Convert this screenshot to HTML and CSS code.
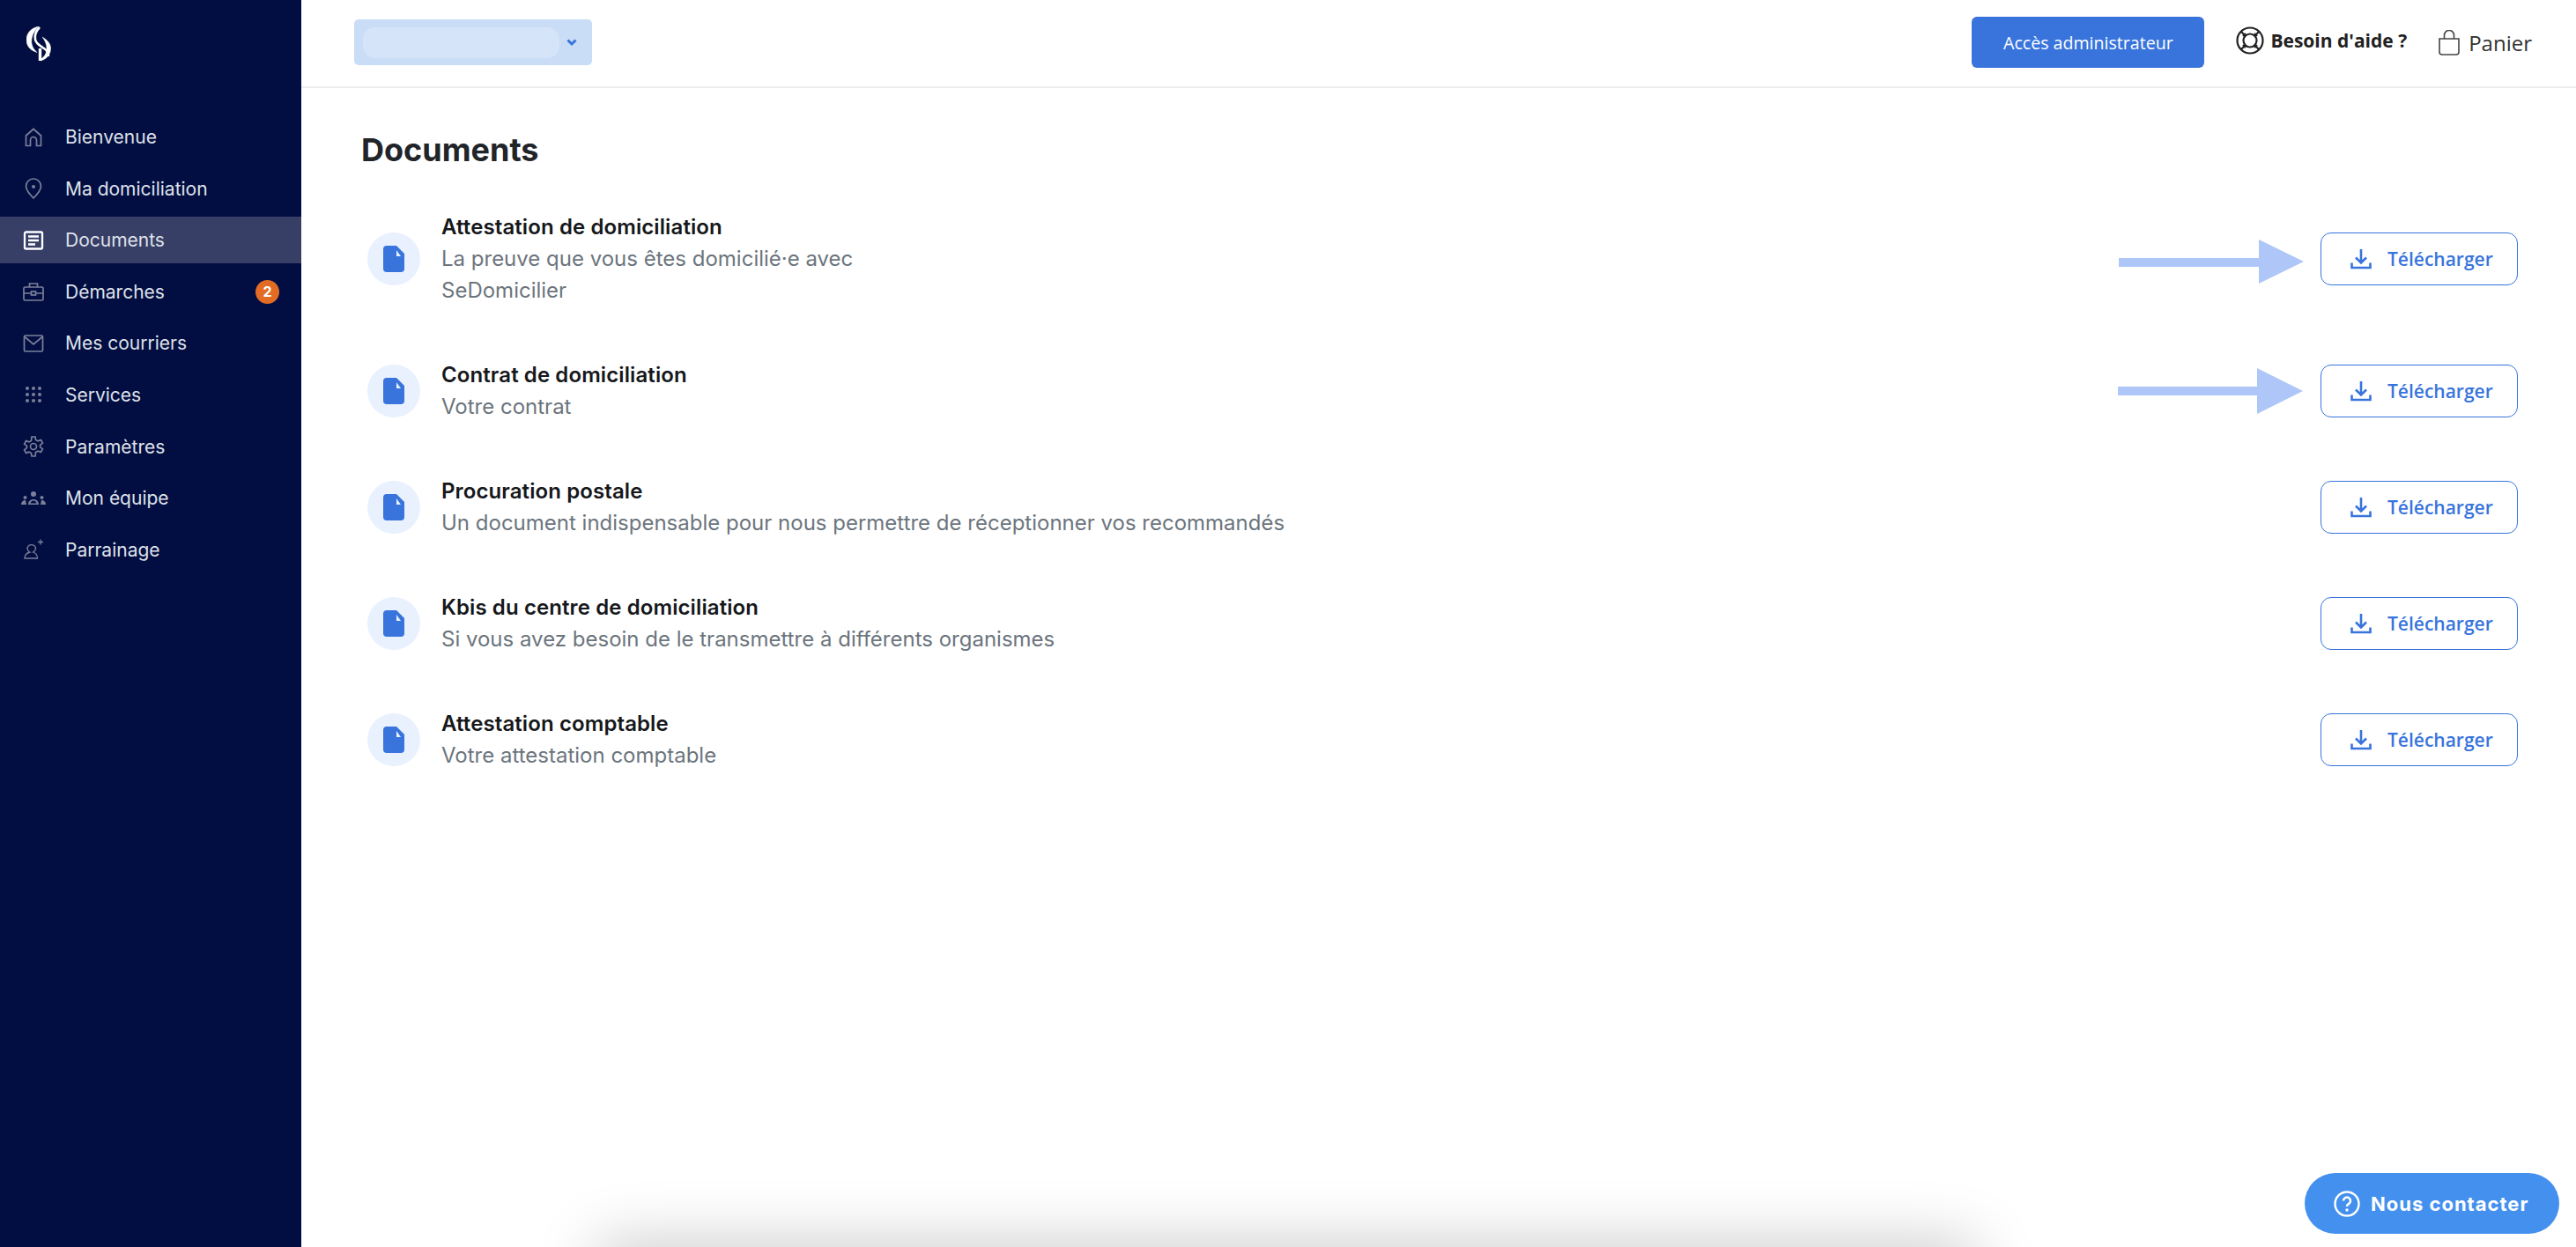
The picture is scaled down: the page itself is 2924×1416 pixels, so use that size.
FILE: index.html
```html
<!DOCTYPE html>
<html lang="fr">
<head>
<meta charset="UTF-8">
<title>Documents</title>
<link rel="stylesheet" href="styles.css">
</head>
<body>

<div class="app">

<!-- Menu de gauche -->
<aside class="sidebar">
    <div class="logo">
        <svg width="30" height="40" viewBox="10 10 30 40" fill="none" stroke="#fff">
            <path d="M24 10C14 12 10 19 10 25c0 7 4 12 12 14.500-5-4.500-7-9.500-6-15.500 1-6 4-10 8-14z" fill="#fff" stroke-width="0.500"/>
            <path d="M25 11c-4 4-6 9-5 14 1 5 6 7 10 10 3 2 5 5 5 9" stroke-width="2.600"/>
            <path d="M26 49c8-2 11.500-8 11.500-14 0-6-4.500-10-9.500-13 3 4 5 8 5 13 0 6-3 10-7 12z" fill="#fff" stroke-width="0.500"/>
            <path d="M25.500 35v14" stroke-width="3.400"/>
        </svg>
    </div>
    <nav class="nav">
        <a class="nav-item">
            <svg class="nav-icon" viewBox="0 0 24 24"><path d="M3.500 21.500V10L12 2.500 20.500 10v11.500h-5V15a3.500 3.500 0 0 0-7 0v6.500z"/></svg>
            <span>Bienvenue</span>
        </a>
        <a class="nav-item">
            <svg class="nav-icon" viewBox="0 0 24 24"><path d="M12 23C7 18 3.500 14 3.500 9.500a8.500 8.500 0 0 1 17 0C20.500 14 17 18 12 23z"/><circle cx="12" cy="10" r="2" class="dot"/></svg>
            <span>Ma domiciliation</span>
        </a>
        <a class="nav-item active">
            <svg class="nav-icon" viewBox="0 0 24 24"><rect x="2" y="2.500" width="20" height="19" rx="1.500"/><path d="M6 7.500h12M6 12h12M6 16.500h8"/></svg>
            <span>Documents</span>
        </a>
        <a class="nav-item">
            <svg class="nav-icon" viewBox="0 0 24 24"><rect x="1" y="7" width="22" height="15" rx="1.500"/><path d="M7.500 7V3h9v4M1 14h8M15 14h8"/><rect x="9.500" y="12" width="5" height="4"/></svg>
            <span>Démarches</span>
            <b class="badge">2</b>
        </a>
        <a class="nav-item">
            <svg class="nav-icon" viewBox="0 0 24 24"><rect x="1.500" y="3" width="21" height="18" rx="1.500"/><path d="M2 4.500L12 13l10-8.500"/></svg>
            <span>Mes courriers</span>
        </a>
        <a class="nav-item">
            <svg class="nav-icon" viewBox="0 0 24 24">
                <g class="dot">
                    <circle cx="5" cy="5" r="2"/><circle cx="12" cy="5" r="2"/><circle cx="19" cy="5" r="2"/>
                    <circle cx="5" cy="12" r="2"/><circle cx="12" cy="12" r="2"/><circle cx="19" cy="12" r="2"/>
                    <circle cx="5" cy="19" r="2"/><circle cx="12" cy="19" r="2"/><circle cx="19" cy="19" r="2"/>
                </g>
            </svg>
            <span>Services</span>
        </a>
        <a class="nav-item">
            <svg class="nav-icon" viewBox="0 0 24 24"><circle cx="12" cy="12" r="3.500"/><path d="M10 1h4l.6 3.500 2.400 1.400 3.400-1.300 2 3.500-2.800 2.300v2.200l2.800 2.300-2 3.500-3.400-1.300-2.400 1.400L14 23h-4l-.6-3.500L7 18.100l-3.400 1.300-2-3.500 2.800-2.300v-2.200L1.600 9.100l2-3.500L7 6.900 9.400 5.500z"/></svg>
            <span>Paramètres</span>
        </a>
        <a class="nav-item">
            <svg class="nav-icon team" viewBox="0 0 28 24">
                <g class="dot">
                    <circle cx="14" cy="7" r="3"/><path d="M8 19c0-4 3-6 6-6s6 2 6 6zM10.500 17.500h7c-.5-2-2-3-3.500-3s-3 1-3.500 3z"/>
                    <circle cx="4.500" cy="11" r="2"/><path d="M0 19c0-3 2-5 5-5l1 5z"/>
                    <circle cx="23.500" cy="11" r="2"/><path d="M28 19c0-3-2-5-5-5l-1 5z"/>
                </g>
            </svg>
            <span>Mon équipe</span>
        </a>
        <a class="nav-item">
            <svg class="nav-icon thin" viewBox="0 0 24 24"><path d="M2 22c0-4 2-6 6-7-2-1-3-3-3-5a5 5 0 0 1 9.500 0c0 2-1 4-3 5 3 1 5 3 5 7zM17 3.500h6M20 .5v6"/></svg>
            <span>Parrainage</span>
        </a>
    </nav>
</aside>

<div class="main">

    <header class="topbar">
        <div class="account-select">
            <div class="account-name"></div>
            <svg class="chevron" width="12" height="10" viewBox="0 0 12 10"><path d="M1.500 2.500L6 7l4.500-4.500"/></svg>
        </div>
        <div class="topbar-right">
            <button class="admin-btn">Accès administrateur</button>
            <a class="help">
                <svg width="32" height="32" viewBox="0 0 32 32" fill="none" stroke="#222" stroke-width="2.200">
                    <circle cx="16" cy="16" r="14.500"/><circle cx="16" cy="16" r="7.500"/>
                    <path d="M10.500 10.500L6 6M21.500 10.500L26 6M10.500 21.500L6 26M21.500 21.500L26 26M8 11l3-3M21 8l3 3M8 21l3 3M21 24l3-3"/>
                </svg>
                <span>Besoin d'aide ?</span>
            </a>
            <a class="cart">
                <svg width="24" height="29" viewBox="1 0 24 29" fill="none" stroke="#444" stroke-width="1.600">
                    <path d="M2 10h22v15a3 3 0 0 1-3 3H5a3 3 0 0 1-3-3z"/><path d="M7.500 10V6a5.500 5.500 0 0 1 11 0v4"/>
                </svg>
                <span>Panier</span>
            </a>
        </div>
    </header>

    <section class="content">
        <h1>Documents</h1>

        <div class="doc-list">
            <div class="doc-row">
                <div class="doc-icon"><svg width="24" height="30" viewBox="0 0 24 30"><path class="doc-body" d="M4 0h11l9 9v17a4 4 0 0 1-4 4H4a4 4 0 0 1-4-4V4a4 4 0 0 1 4-4z"/><path class="doc-fold" d="M15 5l5 7h-5z"/></svg></div>
                <div class="doc-text">
                    <h3>Attestation de domiciliation</h3>
                    <p>La preuve que vous êtes domicilié·e avec<br>SeDomicilier</p>
                </div>
                <button class="dl-btn"><svg width="24" height="24" viewBox="0 0 24 24"><path d="M12 1v15M6 10.500l6 6 6-6M1.500 16.500V22h21v-5.500"/></svg>Télécharger</button>
            </div>
            <div class="doc-row">
                <div class="doc-icon"><svg width="24" height="30" viewBox="0 0 24 30"><path class="doc-body" d="M4 0h11l9 9v17a4 4 0 0 1-4 4H4a4 4 0 0 1-4-4V4a4 4 0 0 1 4-4z"/><path class="doc-fold" d="M15 5l5 7h-5z"/></svg></div>
                <div class="doc-text">
                    <h3>Contrat de domiciliation</h3>
                    <p>Votre contrat</p>
                </div>
                <button class="dl-btn"><svg width="24" height="24" viewBox="0 0 24 24"><path d="M12 1v15M6 10.500l6 6 6-6M1.500 16.500V22h21v-5.500"/></svg>Télécharger</button>
            </div>
            <div class="doc-row">
                <div class="doc-icon"><svg width="24" height="30" viewBox="0 0 24 30"><path class="doc-body" d="M4 0h11l9 9v17a4 4 0 0 1-4 4H4a4 4 0 0 1-4-4V4a4 4 0 0 1 4-4z"/><path class="doc-fold" d="M15 5l5 7h-5z"/></svg></div>
                <div class="doc-text">
                    <h3>Procuration postale</h3>
                    <p>Un document indispensable pour nous permettre de réceptionner vos recommandés</p>
                </div>
                <button class="dl-btn"><svg width="24" height="24" viewBox="0 0 24 24"><path d="M12 1v15M6 10.500l6 6 6-6M1.500 16.500V22h21v-5.500"/></svg>Télécharger</button>
            </div>
            <div class="doc-row">
                <div class="doc-icon"><svg width="24" height="30" viewBox="0 0 24 30"><path class="doc-body" d="M4 0h11l9 9v17a4 4 0 0 1-4 4H4a4 4 0 0 1-4-4V4a4 4 0 0 1 4-4z"/><path class="doc-fold" d="M15 5l5 7h-5z"/></svg></div>
                <div class="doc-text">
                    <h3>Kbis du centre de domiciliation</h3>
                    <p>Si vous avez besoin de le transmettre à différents organismes</p>
                </div>
                <button class="dl-btn"><svg width="24" height="24" viewBox="0 0 24 24"><path d="M12 1v15M6 10.500l6 6 6-6M1.500 16.500V22h21v-5.500"/></svg>Télécharger</button>
            </div>
            <div class="doc-row">
                <div class="doc-icon"><svg width="24" height="30" viewBox="0 0 24 30"><path class="doc-body" d="M4 0h11l9 9v17a4 4 0 0 1-4 4H4a4 4 0 0 1-4-4V4a4 4 0 0 1 4-4z"/><path class="doc-fold" d="M15 5l5 7h-5z"/></svg></div>
                <div class="doc-text">
                    <h3>Attestation comptable</h3>
                    <p>Votre attestation comptable</p>
                </div>
                <button class="dl-btn"><svg width="24" height="24" viewBox="0 0 24 24"><path d="M12 1v15M6 10.500l6 6 6-6M1.500 16.500V22h21v-5.500"/></svg>Télécharger</button>
            </div>
        </div>
    </section>
</div>

</div>

<!-- Flèches d'annotation par-dessus la page -->
<svg class="arrow arrow-one" width="210" height="50" viewBox="0 0 210 50"><path d="M0 21h159V0l51 25-51 25V31H0z"/></svg>
<svg class="arrow arrow-two" width="210" height="52" viewBox="0 0 210 52"><path d="M0 21h158V0l52 26-52 26V31H0z"/></svg>

<div class="bottom-shadow"></div>

<a class="contact">
    <svg width="30" height="30" viewBox="0 0 30 30" fill="none" stroke="#fff" stroke-width="2.400">
        <circle cx="15" cy="15" r="13.500"/>
        <path d="M11 11.500a4 4 0 1 1 6 3.500c-1.500.8-2 1.500-2 3" stroke-width="2.600"/>
        <circle cx="15" cy="22" r="1.700" fill="#fff" stroke="none"/>
    </svg>
    <span>Nous contacter</span>
</a>

</body>
</html>
```

FILE: styles.css
```css
html, body {margin:0;height:100%;overflow:hidden;}
body {font-family:"Inter",sans-serif;color:#212529;background:#fff;}
.app {display:flex;height:100%;}

.sidebar {width:342px;flex-shrink:0;background:#020e42;}
.logo {height:129px;box-sizing:border-box;padding:30px 0 0 30px;}
.logo svg {display:block;}
.nav {display:flex;flex-direction:column;gap:5.6px;}
.nav-item {display:flex;align-items:center;height:53px;padding:0 25px 0 26px;color:#dfe1e9;font-size:21px;}
.nav-item span {margin-left:24px;}
.nav-item.active {background:#373f67;}
.nav-icon {width:24px;height:24px;fill:none;stroke:#7b8099;stroke-width:1.700;flex-shrink:0;}
.nav-icon .dot {fill:#7b8099;stroke:none;}
.nav-icon.team {width:28px;margin:0 -2px;}
.nav-icon.thin {stroke-width:1.300;}
.nav-item.active .nav-icon {stroke:#fff;stroke-width:2.300;}
.badge {margin-left:auto;width:27px;height:27px;border-radius:50%;background:#e36c25;color:#fff;font-size:16px;font-weight:700;display:flex;align-items:center;justify-content:center;}

.main {flex:1;min-width:0;}
.topbar {height:100px;box-sizing:border-box;border-bottom:2px solid #eeeeee;display:flex;align-items:flex-start;justify-content:space-between;padding:19px 50px 0 60px;font-family:"Open Sans",sans-serif;}
.account-select {width:270px;height:52px;margin-top:3px;box-sizing:border-box;padding:8px 17px 8px 10px;background:#c9ddf7;border-radius:5px;display:flex;align-items:center;justify-content:space-between;}
.account-name {width:223px;height:35px;background:#d6e4fa;border-radius:14px;}
.chevron {fill:none;stroke:#3874dc;stroke-width:3;}
.topbar-right {display:flex;align-items:flex-start;}
.admin-btn {width:264px;height:58px;background:#3874dc;color:#fff;border:none;border-radius:6px;font-family:inherit;font-size:19.6px;}
.help {display:flex;align-items:center;margin:11px 0 0 36px;font-size:21px;font-weight:700;color:#222;}
.help span {margin-left:7px;}
.cart {display:flex;align-items:center;margin:13px 0 0 36px;font-size:24px;color:#333;}
.cart span {margin-left:10px;}

.content {padding:0 66px 0 68px;}
h1 {margin:0;padding-top:48px;height:140px;box-sizing:border-box;font-size:36px;line-height:44px;font-weight:700;}
.doc-list {display:flex;flex-direction:column;gap:60px;padding-left:7px;}
.doc-row {display:flex;align-items:center;}
.doc-icon {width:60px;height:60px;border-radius:50%;background:#e9f1fe;display:flex;align-items:center;justify-content:center;flex-shrink:0;}
.doc-body {fill:#3874dc;}
.doc-fold {fill:#e9f1fe;}
.doc-text {flex:1;margin-left:24px;}
.doc-text h3 {margin:0;font-size:24px;line-height:36px;font-weight:600;color:#16181b;letter-spacing:0.1px;}
.doc-text p {margin:0;font-size:24px;line-height:36px;color:#6c757d;}
.dl-btn {width:224px;height:60px;padding:0 0 0 33px;display:flex;align-items:center;gap:18px;background:#fff;border:1.500px solid #3874dc;border-radius:12px;color:#3874dc;font-family:"Open Sans",sans-serif;font-size:21px;font-weight:600;}
.dl-btn svg {fill:none;stroke:#3874dc;stroke-width:2.600;}

/* annotations et éléments posés sur la page */
.arrow {position:absolute;fill:#aec6f8;}
.arrow-one {left:2405px;top:272px;}
.arrow-two {left:2404px;top:418px;}
.bottom-shadow {position:absolute;left:690px;width:1540px;top:1424px;height:40px;box-shadow:0 0 70px 12px rgba(0,0,0,0.22);}
.contact {position:absolute;left:2616px;top:1332px;width:289px;height:69px;box-sizing:border-box;padding-left:33px;border-radius:35px;background:#4490ee;color:#fff;display:flex;align-items:center;gap:12px;font-size:22px;font-weight:700;letter-spacing:1px;}
```
